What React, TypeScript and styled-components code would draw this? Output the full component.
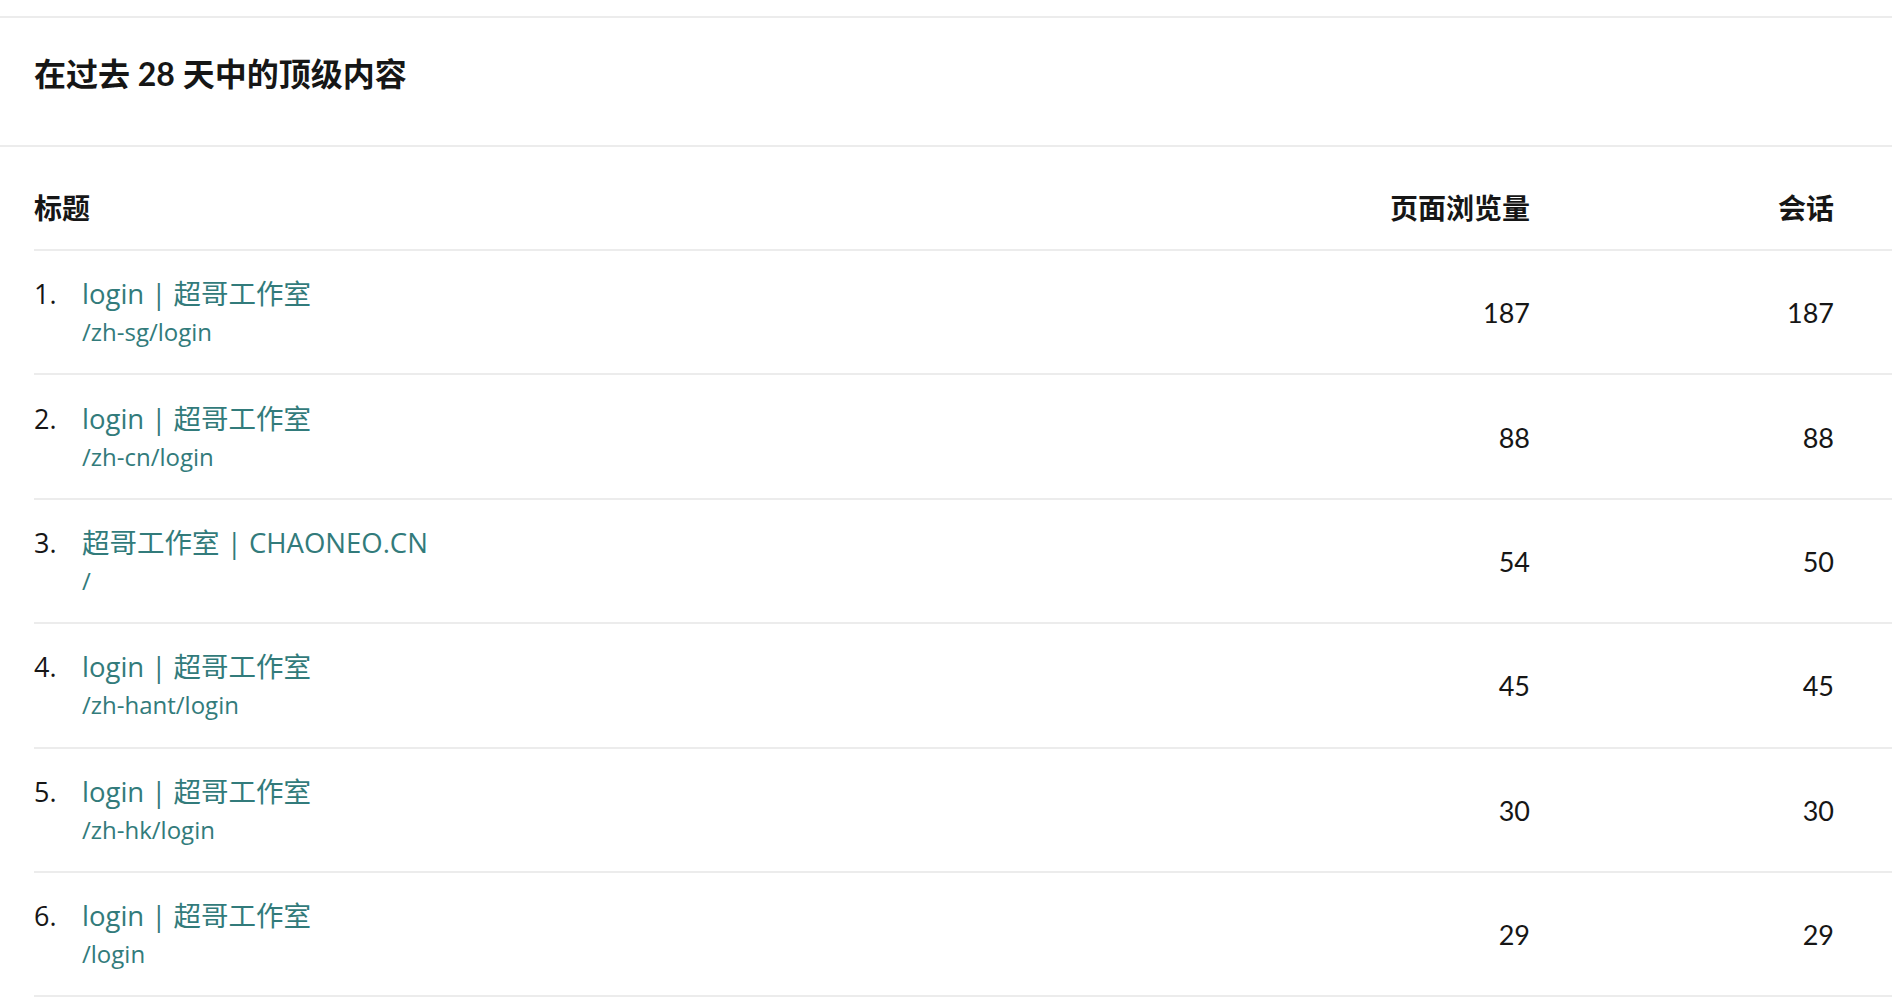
import styled, { createGlobalStyle } from "styled-components";

const GlobalStyle = createGlobalStyle`
    html, body {
        margin: 0;
        padding: 0;
        background: #ffffff;
    }
    body {
        font-family: "Open Sans", "Noto Sans CJK SC", sans-serif;
        color: #161616;
    }
`;

const Palette = {
    Text: "#161616",
    Link: "#327b7b",
    Line: "#ececec",
};

type PageRow = {
    title: string;
    path: string;
    views: number;
    sessions: number;
};

const rows: PageRow[] = [
    { title: "login | 超哥工作室", path: "/zh-sg/login", views: 187, sessions: 187 },
    { title: "login | 超哥工作室", path: "/zh-cn/login", views: 88, sessions: 88 },
    { title: "超哥工作室 | CHAONEO.CN", path: "/", views: 54, sessions: 50 },
    { title: "login | 超哥工作室", path: "/zh-hant/login", views: 45, sessions: 45 },
    { title: "login | 超哥工作室", path: "/zh-hk/login", views: 30, sessions: 30 },
    { title: "login | 超哥工作室", path: "/login", views: 29, sessions: 29 },
];

const Card = styled.section`
    margin-top: 16px;
    border-top: 2px solid ${Palette.Line};
    background: #ffffff;
`;

const CardHeader = styled.header`
    padding: 36px 34px 51px;
    border-bottom: 2px solid ${Palette.Line};
`;

const CardTitle = styled.h2`
    margin: 0;
    font-family: Lato, "Noto Sans CJK SC", sans-serif;
    font-size: 32px;
    line-height: 40px;
    font-weight: 700;
    color: ${Palette.Text};
`;

const Table = styled.div`
    padding-left: 34px;
`;

const Row = styled.div<{ $head?: boolean }>`
    display: grid;
    grid-template-columns: 1fr 304px 304px;
    align-items: center;
    padding-right: 58px;
    border-bottom: 2px solid ${Palette.Line};
    box-sizing: border-box;
    height: ${(p) => (p.$head ? "104px" : "124.4px")};
    padding-top: ${(p) => (p.$head ? "20px" : "2px")};
`;

const HeadCell = styled.div<{ $right?: boolean }>`
    font-size: 28px;
    line-height: 40px;
    font-weight: 700;
    color: ${Palette.Text};
    text-align: ${(p) => (p.$right ? "right" : "left")};
`;

const TitleCell = styled.div`
    display: flex;
    align-items: flex-start;
`;

const Rank = styled.span`
    width: 48px;
    flex-shrink: 0;
    font-size: 27px;
    line-height: 38px;
    color: ${Palette.Text};
`;

const PageInfo = styled.div`
    display: flex;
    flex-direction: column;
`;

const PageTitle = styled.a`
    font-size: 27.5px;
    line-height: 38px;
    color: ${Palette.Link};
    text-decoration: none;
`;

const PagePath = styled.span`
    font-size: 24px;
    line-height: 38px;
    color: ${Palette.Link};
`;

const NumCell = styled.div`
    font-family: Lato, sans-serif;
    font-size: 27px;
    line-height: 38px;
    text-align: right;
    color: ${Palette.Text};
`;

export default function App() {
    return (
        <>
            <GlobalStyle />
            <Card>
                <CardHeader>
                    <CardTitle>在过去 28 天中的顶级内容</CardTitle>
                </CardHeader>
                <Table>
                    <Row $head>
                        <HeadCell>标题</HeadCell>
                        <HeadCell $right>页面浏览量</HeadCell>
                        <HeadCell $right>会话</HeadCell>
                    </Row>
                    {rows.map((row, i) => (
                        <Row key={i}>
                            <TitleCell>
                                <Rank>{i + 1}.</Rank>
                                <PageInfo>
                                    <PageTitle href="#">{row.title}</PageTitle>
                                    <PagePath>{row.path}</PagePath>
                                </PageInfo>
                            </TitleCell>
                            <NumCell>{row.views}</NumCell>
                            <NumCell>{row.sessions}</NumCell>
                        </Row>
                    ))}
                </Table>
            </Card>
        </>
    );
}
